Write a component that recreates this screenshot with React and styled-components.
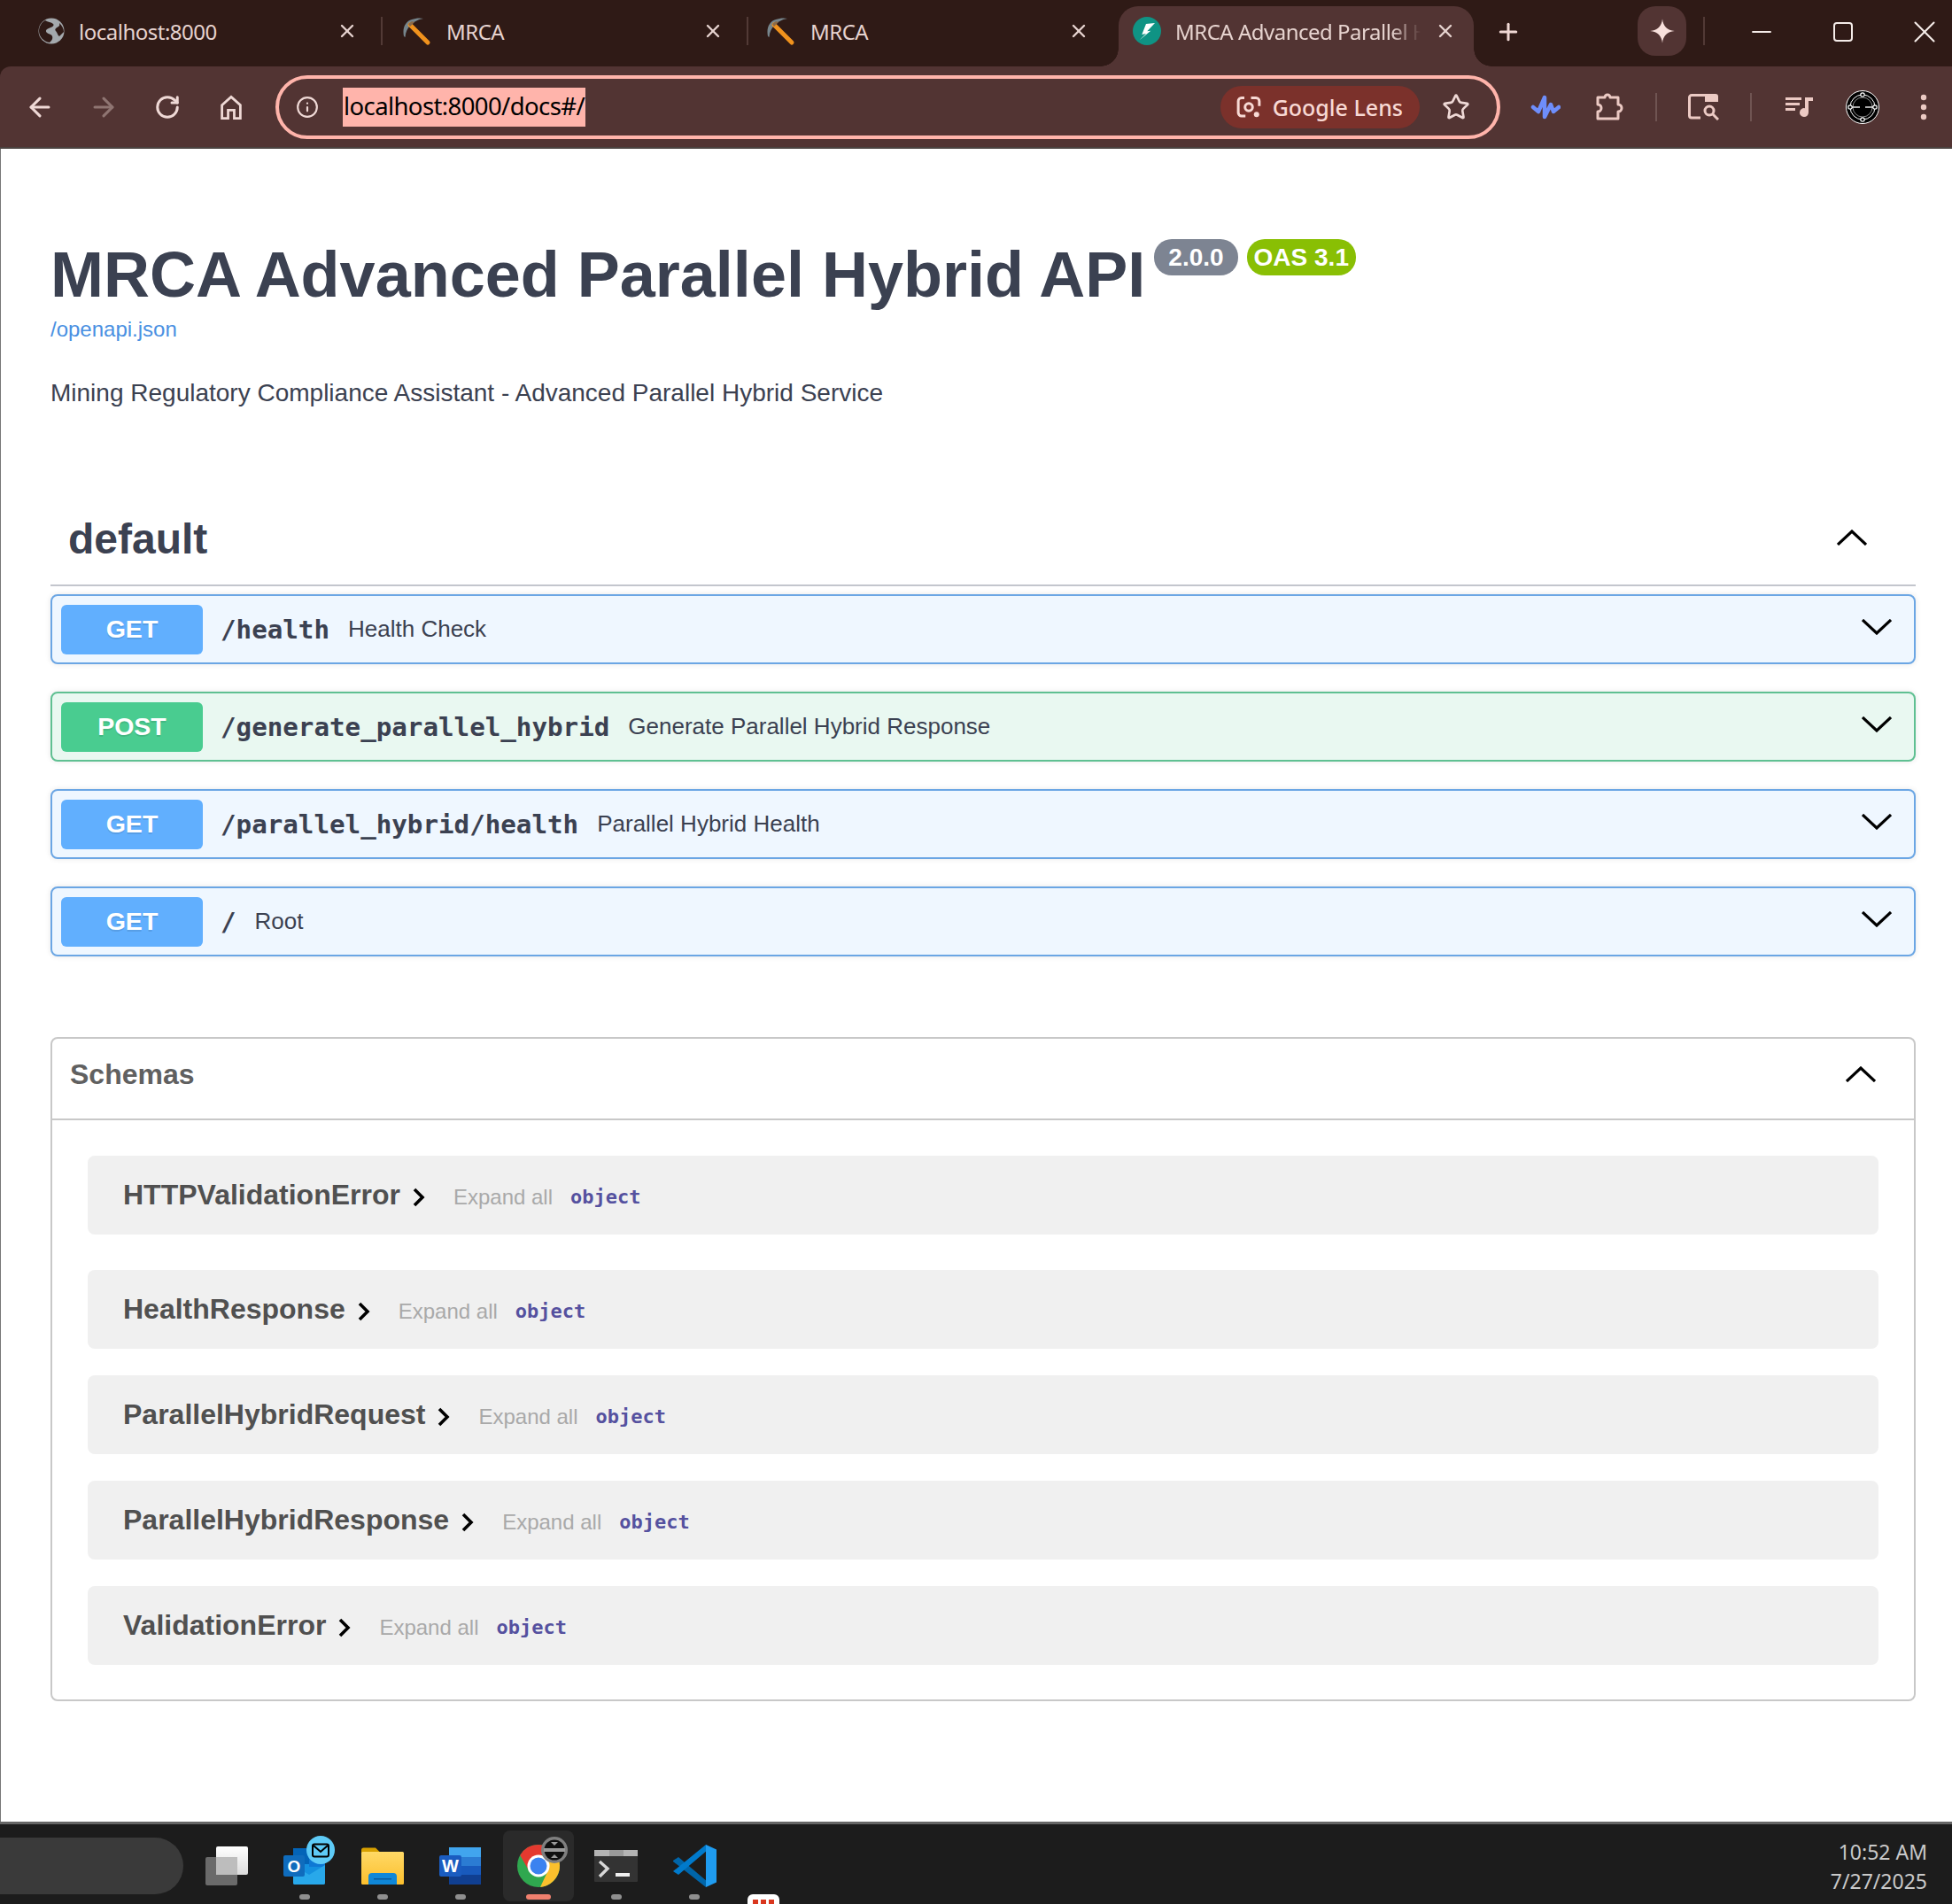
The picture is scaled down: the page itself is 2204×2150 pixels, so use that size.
import React from 'react';
import styled, { createGlobalStyle } from 'styled-components';
import { ArrowLeft, ArrowRight, RotateCw, Info, Star, X, Plus, Minus } from 'lucide-react';

const GlobalStyle = createGlobalStyle`
  html, body {
    margin: 0;
    padding: 0;
    width: 2204px;
    height: 2150px;
    overflow: hidden;
    background: #fff;
  }
  * { box-sizing: border-box; }
`;

const Screen = styled.div`
  display: flex;
  flex-direction: column;
  width: 2204px;
  height: 2150px;
  font-family: "Liberation Sans", Arial, sans-serif;
  background: #2f1a16;
`;

/* browser chrome */
const TabStrip = styled.div`
  display: flex;
  align-items: flex-end;
  flex: none;
  height: 75px;
  padding-left: 20px;
  background: #2f1a16;
  font-family: "Noto Sans", sans-serif;
`;

const Tab = styled.div`
  display: flex;
  align-items: center;
  flex: none;
  width: ${({ $w }) => $w}px;
  height: 68px;
  padding-left: ${({ $pad }) => $pad}px;
  padding-right: 28px;
  padding-bottom: 12px;
  gap: 16px;
  position: relative;
  color: #e6d3cf;
  ${({ $sep }) => $sep && `
    &::after {
      content: "";
      position: absolute;
      right: 0;
      top: 12px;
      width: 2px;
      height: 32px;
      background: #523a36;
    }
  `}
`;

const ActiveTab = styled(Tab)`
  background: #523433;
  border-radius: 22px 22px 0 0;
  margin-left: 5px;
  padding-right: 20px;
  &::before, &::after {
    content: "";
    position: absolute;
    bottom: 0;
    width: 20px;
    height: 20px;
  }
  &::before {
    left: -20px;
    background: radial-gradient(circle at 0 0, transparent 19.5px, #523433 20px);
  }
  &::after {
    right: -20px;
    background: radial-gradient(circle at 100% 0, transparent 19.5px, #523433 20px);
  }
`;

const TabTitle = styled.span`
  flex: 1;
  min-width: 0;
  font-size: 24px;
  letter-spacing: -0.5px;
  white-space: nowrap;
  overflow: hidden;
  ${({ $fade }) => $fade && `
    -webkit-mask-image: linear-gradient(to right, #000 88%, transparent 100%);
    mask-image: linear-gradient(to right, #000 88%, transparent 100%);
  `}
`;

const NewTab = styled.div`
  display: flex;
  align-items: center;
  justify-content: center;
  flex: none;
  width: 40px;
  height: 40px;
  margin: 0 0 19px 19px;
  color: #f0d8d4;
`;

const GeminiButton = styled.div`
  display: flex;
  align-items: center;
  justify-content: center;
  flex: none;
  width: 55px;
  height: 56px;
  margin: 0 0 12px 126px;
  border-radius: 20px;
  background: #523433;
`;

const StripSep = styled.div`
  flex: none;
  width: 2px;
  height: 32px;
  margin: 0 0 24px 19px;
  background: #523a36;
`;

const WindowButton = styled.div`
  display: flex;
  align-items: center;
  justify-content: center;
  flex: none;
  width: 92px;
  height: 75px;
  padding-bottom: 3px;
  color: #f5ece9;
  align-self: stretch;
  margin-left: ${({ $ml }) => $ml || 0}px;
`;

const Toolbar = styled.div`
  display: flex;
  align-items: center;
  flex: none;
  height: 93px;
  padding: 0 0 0 9px;
  background: #523433;
  border-top-left-radius: 12px;
  border-bottom: 2px solid #4b4341;
  overflow: hidden;
`;

const ToolButton = styled.div`
  display: flex;
  align-items: center;
  justify-content: center;
  flex: none;
  width: ${({ $w }) => $w || 72}px;
  height: 60px;
  color: ${({ $dim }) => ($dim ? '#8f7572' : '#efd9d6')};
`;

const ToolSep = styled.div`
  flex: none;
  width: 2px;
  height: 32px;
  margin: 0 ${({ $mx }) => $mx}px;
  background: #6f5452;
`;

const Omnibox = styled.div`
  display: flex;
  align-items: center;
  flex: none;
  width: 1383px;
  height: 72px;
  margin: 0 15px 0 14px;
  padding: 0 30px 0 19px;
  border: 4px solid #ffb4ab;
  border-radius: 36px;
  font-family: "Noto Sans", sans-serif;
`;

const UrlSelection = styled.span`
  display: block;
  margin-left: 27px;
  padding: 0 1px;
  height: 44px;
  line-height: 42px;
  background: #ffb4ab;
  color: #000;
  font-size: 27.5px;
  letter-spacing: -0.6px;
  white-space: nowrap;
`;

const LensPill = styled.div`
  display: flex;
  align-items: center;
  gap: 12px;
  height: 48px;
  margin-left: auto;
  padding: 0 19px 0 17px;
  border-radius: 24px;
  background: #7b312b;
  color: #f8d9d4;
  font-size: 25px;
  font-weight: 500;
`;

const StarWrap = styled.div`
  display: flex;
  margin-left: 25px;
  color: #efd9d6;
`;

/* swagger page */
const Page = styled.main`
  flex: 1;
  min-height: 0;
  padding: 102px 41px 0 56px;
  background: #fff;
  border-left: 1px solid #777;
  color: #3b4151;
`;

const TitleRow = styled.div`
  display: flex;
  align-items: flex-start;
  gap: 10px;
`;

const Title = styled.h1`
  margin: 4px 0 0;
  font-size: 72px;
  line-height: 72px;
  font-weight: 700;
  white-space: nowrap;
`;

const Badge = styled.span`
  display: flex;
  align-items: center;
  justify-content: center;
  height: 41px;
  padding: 0 ${({ $pad }) => $pad}px;
  border-radius: 20px;
  background: ${({ $bg }) => $bg};
  color: #fff;
  font-size: 28px;
  font-weight: 700;
`;

const SpecLink = styled.a`
  display: block;
  margin-top: 12px;
  color: #4990e2;
  font-size: 24px;
  line-height: 28px;
`;

const Description = styled.p`
  margin: 38px 0 0;
  font-size: 28px;
  line-height: 40px;
`;

const TagHeader = styled.div`
  display: flex;
  align-items: center;
  justify-content: space-between;
  height: 104px;
  margin-top: 94px;
  padding: 0 55px 0 20px;
  border-bottom: 2px solid #c3c6cd;
`;

const TagName = styled.h3`
  margin: 0;
  font-size: 48px;
  line-height: 60px;
  font-weight: 700;
`;

const RaisedChevron = styled.div`
  display: flex;
  margin-bottom: 5px;
`;

const Opblock = styled.div`
  display: flex;
  align-items: center;
  height: 79px;
  margin-top: ${({ $first }) => ($first ? 9 : 31)}px;
  padding: 0 25px 0 10px;
  background: ${({ $bg }) => $bg};
  border: 2px solid ${({ $line }) => $line};
  border-radius: 8px;
  box-shadow: 0 0 6px rgba(0, 0, 0, 0.1);
`;

const Method = styled.span`
  display: flex;
  align-items: center;
  justify-content: center;
  flex: none;
  width: 160px;
  height: 56px;
  border-radius: 6px;
  background: ${({ $bg }) => $bg};
  color: #fff;
  font-size: 28.5px;
  font-weight: 700;
  text-shadow: 0 2px 0 rgba(0, 0, 0, 0.1);
`;

const OpPath = styled.span`
  margin-left: 20px;
  font-family: "DejaVu Sans Mono", monospace;
  font-size: 29.2px;
  font-weight: 700;
`;

const OpSummary = styled.span`
  margin-left: 21px;
  font-size: 26px;
`;

const OpChevron = styled.div`
  display: flex;
  margin: 0 0 5px auto;
`;

const SchemaBox = styled.section`
  height: 750px;
  margin-top: 91px;
  border: 2px solid #c8c8c8;
  border-radius: 8px;
`;

const SchemaHeader = styled.div`
  display: flex;
  align-items: center;
  justify-content: space-between;
  height: 92px;
  padding: 0 43px 10px 20px;
  border-bottom: 2px solid #c8c8c8;
`;

const SchemaTitle = styled.h4`
  margin: 0;
  color: #606060;
  font-size: 32px;
  font-weight: 700;
`;

const ModelList = styled.div`
  padding: 40px 40px 0;
`;

const ModelRow = styled.div`
  display: flex;
  align-items: center;
  height: 89px;
  margin-bottom: ${({ $after }) => $after}px;
  padding: 4px 40px 0;
  border-radius: 8px;
  background: #f0f0f0;
`;

const ModelName = styled.span`
  color: #505050;
  font-size: 32px;
  font-weight: 700;
  margin-bottom: 4px;
`;

const ModelArrow = styled.div`
  display: flex;
  margin-left: 14px;
`;

const ExpandAll = styled.span`
  margin-left: 32px;
  color: #a9a9a9;
  font-size: 24px;
`;

const ModelType = styled.span`
  margin-left: 20px;
  color: #55519f;
  font-family: "DejaVu Sans Mono", monospace;
  font-size: 22px;
  font-weight: 700;
`;

/* windows taskbar */
const Taskbar = styled.footer`
  display: flex;
  flex: none;
  height: 93px;
  background: #1c1c1c;
  border-top: 3px solid #666;
  overflow: hidden;
`;

const SearchPill = styled.div`
  flex: none;
  width: 207px;
  height: 64px;
  margin: 15px 5px 0 0;
  border-radius: 0 32px 32px 0;
  background: #3a3a3a;
`;

const TaskSlot = styled.div`
  display: flex;
  flex-direction: column;
  align-items: center;
  flex: none;
  width: 80px;
  height: 80px;
  margin: 7px 4px 3px;
  padding-top: 8px;
  border-radius: 8px;
  background: ${({ $active }) => ($active ? '#2a2a2a' : 'transparent')};
`;

const TaskIcon = styled.svg`
  display: block;
  flex: none;
  overflow: visible;
`;

const TaskDot = styled.div`
  flex: none;
  width: ${({ $active }) => ($active ? 28 : 12)}px;
  height: 6px;
  border-radius: 3px;
  background: ${({ $active }) => ($active ? '#f0806e' : '#8f8f8f')};
`;

const PeekIcon = styled.svg`
  display: block;
  flex: none;
  margin: 79px 0 0 16px;
`;

const Clock = styled.div`
  margin-left: auto;
  padding: 15px 28px 0 0;
  color: #c9c9c9;
  font-family: "Noto Sans", sans-serif;
  font-size: 23px;
  line-height: 33px;
  text-align: right;
`;

/* drawings */
const Chevron = ({ up, w = 34 }) => (
  <svg width={w} height={18} viewBox="0 0 34 18" fill="none" stroke="#000" strokeWidth="3.2">
    <polyline points={up ? '1,17 17,2 33,17' : '1,1 17,16 33,1'} />
  </svg>
);

const SmallArrow = () => (
  <svg width={14} height={22} viewBox="0 0 14 22" fill="none" stroke="#000" strokeWidth="3.6">
    <polyline points="2,2 11,11 2,20" />
  </svg>
);

const GlobeIcon = () => (
  <svg width={30} height={30} viewBox="0 0 30 30">
    <circle cx="15" cy="15" r="14.5" fill="#a4a9ad" />
    <path d="M8 3c3 2 7 2 9 4s-2 4-5 5-4 3-2 5 5 1 6 4-1 5-3 7C6 27 1 21 1 15 1 10 4 5 8 3zM24 6c3 3 5 6 5 10l-5 5c-2-1-2-4-4-6s1-4 3-5 1-3 1-4z" fill="#2f1a16" />
  </svg>
);

const PickaxeIcon = () => (
  <svg width={33} height={33} viewBox="0 0 33 33" style={{ flex: 'none' }}>
    <path d="M1 22C-1 12 3 5 10 3 14 1.500 19 1 23 2 17 3 11 6 8 10 5 13 3 17 2.500 23z" fill="#76858c" />
    <path d="M8 9L28 29" stroke="#f0921d" strokeWidth="5" strokeLinecap="round" />
    <path d="M6 8l4-3 3 1-5 5z" fill="#8a6a4a" />
  </svg>
);

const FastApiIcon = () => (
  <svg width={32} height={32} viewBox="0 0 32 32" style={{ flex: 'none' }}>
    <circle cx="16" cy="16" r="16" fill="#0f9384" />
    <path d="M25 7L15 8 10.300 20 15 19 7.700 26.300 20.300 15.700 16.300 16.300z" fill="#fff" />
  </svg>
);

const Sparkle = () => (
  <svg width={30} height={30} viewBox="0 0 24 24">
    <path d="M12 1c.6 6.600 4.400 10.400 11 11-6.600.6-10.400 4.400-11 11-.6-6.600-4.400-10.400-11-11 6.600-.6 10.400-4.400 11-11z" fill="#f8e0dc" />
  </svg>
);

const HomeIcon = () => (
  <svg width={28} height={30} viewBox="0 0 24 26" fill="none" stroke="currentColor" strokeWidth="2.4">
    <path d="M3 11L12 3l9 8v13h-6v-8H9v8H3z" />
  </svg>
);

const LensIcon = () => (
  <svg width={30} height={30} viewBox="0 0 24 24" fill="none" stroke="#f8d9d4" strokeWidth="2.4">
    <path d="M8 3.500H5.500a3 3 0 00-3 3V17a3 3 0 003 3H9M14 3.500h4.500a3 3 0 013 3V11" />
    <circle cx="12" cy="12" r="3.400" />
    <circle cx="19" cy="18.500" r="2.400" fill="#f8d9d4" stroke="none" />
  </svg>
);

const WaveIcon = () => (
  <svg width={34} height={30} viewBox="0 0 34 30" fill="none" stroke="#6e8efb" strokeWidth="4.500" strokeLinejoin="round" strokeLinecap="round">
    <polyline points="3,15 9,20 16,4 16,26 23,12 26,20 32,15" />
  </svg>
);

const PuzzleIcon = () => (
  <svg width={32} height={32} viewBox="0 0 32 32" fill="none" stroke="#eccac4" strokeWidth="3">
    <path d="M3 5H11a3 3 0 016 0H26V13a4 4 0 010 8V29H3V21a4 4 0 000-8z" strokeLinejoin="round" />
  </svg>
);

const TabSearchIcon = () => (
  <svg width={35} height={30} viewBox="0 0 35 30" fill="none" stroke="#eccac4" strokeWidth="3">
    <path d="M14 27H4a2.500 2.500 0 01-2.500-2.500V4A2.500 2.500 0 014 1.500H20" />
    <path d="M19 0H31a3 3 0 013 3V9H19z" fill="#eccac4" stroke="none" />
    <circle cx="24" cy="19" r="5" />
    <path d="M28 23l6 6" />
  </svg>
);

const QueueIcon = () => (
  <svg width={31} height={24} viewBox="0 0 31 24" fill="none" stroke="#eccac4" strokeWidth="3">
    <path d="M0 2.500h18M0 8.500h16M0 14.500h11" />
    <path d="M22 1H31V5H26V18a5 5 0 11-4-4.800z" fill="#eccac4" stroke="none" />
  </svg>
);

const AvatarIcon = () => (
  <svg width={38} height={38} viewBox="0 0 38 38" fill="none">
    <circle cx="19" cy="19" r="18.500" fill="#000" stroke="#fff" strokeWidth="1" />
    <circle cx="19" cy="19" r="14" stroke="#fff" strokeWidth="1" />
    <circle cx="19" cy="19" r="11" stroke="#aaa" strokeWidth="0.800" />
    <path d="M5 19h11M22 19h11" stroke="#e8e8e8" strokeWidth="1.600" />
    <circle cx="19" cy="5" r="2.200" fill="#000" stroke="#fff" strokeWidth="1.200" />
    <circle cx="19" cy="33" r="2.200" fill="#000" stroke="#fff" strokeWidth="1.200" />
    <circle cx="5" cy="19" r="2.200" fill="#000" stroke="#fff" strokeWidth="1.200" />
    <circle cx="33" cy="19" r="2.200" fill="#000" stroke="#fff" strokeWidth="1.200" />
  </svg>
);

const DotsIcon = () => (
  <svg width={8} height={30} viewBox="0 0 8 30" fill="#eccac4">
    <circle cx="4" cy="4" r="3.200" />
    <circle cx="4" cy="15" r="3.200" />
    <circle cx="4" cy="26" r="3.200" />
  </svg>
);

const CopyGlyph = () => (
  <TaskIcon width={64} height={64} viewBox="0 0 64 64">
    <defs>
      <linearGradient id="cg" x1="0" y1="0" x2="0" y2="1">
        <stop offset="0" stopColor="#fff" />
        <stop offset="1" stopColor="#dcdcdc" />
      </linearGradient>
    </defs>
    <rect x="20" y="10" width="36" height="32" rx="2" fill="url(#cg)" />
    <rect x="8" y="22" width="36" height="32" rx="2" fill="#6a6a6a" />
    <rect x="20" y="22" width="24" height="20" fill="#bdbdbd" />
  </TaskIcon>
);

const OutlookGlyph = () => (
  <TaskIcon width={64} height={64} viewBox="0 0 64 64">
    <rect x="19" y="12" width="36" height="41" rx="2" fill="#1490df" />
    <rect x="19" y="12" width="18" height="18" fill="#0364b8" />
    <rect x="37" y="21" width="18" height="12" fill="#0f78d4" />
    <path d="M19 31l18 11 18-11v20a2 2 0 01-2 2H21a2 2 0 01-2-2z" fill="#28a8ea" />
    <rect x="8" y="20" width="24" height="24" rx="2" fill="#0f6cbd" />
    <text x="20" y="39" textAnchor="middle" fill="#fff" fontSize="19" fontWeight="700" fontFamily="Liberation Sans">O</text>
    <circle cx="50" cy="14" r="16" fill="#5ecbf7" />
    <rect x="41" y="7.500" width="18" height="14" rx="2" fill="none" stroke="#000" strokeWidth="2" />
    <path d="M42 9l8 7 8-7" fill="none" stroke="#000" strokeWidth="2" />
  </TaskIcon>
);

const FolderGlyph = () => (
  <TaskIcon width={64} height={64} viewBox="0 0 64 64">
    <defs>
      <linearGradient id="fg" x1="0" y1="0" x2="0" y2="1">
        <stop offset="0" stopColor="#ffd966" />
        <stop offset="1" stopColor="#fcbf2d" />
      </linearGradient>
    </defs>
    <path d="M8 14a2.500 2.500 0 012.500-2.500H24l5 5v8H8z" fill="#d8a000" />
    <rect x="8" y="16" width="48" height="37" rx="1.500" fill="url(#fg)" />
    <path d="M16 53V44a4 4 0 014-4h24a4 4 0 014 4v9z" fill="#0f87d8" />
    <rect x="22" y="46" width="20" height="1.500" fill="#0b5a99" />
  </TaskIcon>
);

const WordGlyph = () => (
  <TaskIcon width={64} height={64} viewBox="0 0 64 64">
    <rect x="19" y="11" width="36" height="11" fill="#41a5ee" />
    <rect x="19" y="22" width="36" height="10" fill="#2b7cd3" />
    <rect x="19" y="32" width="36" height="10" fill="#185abd" />
    <rect x="19" y="42" width="36" height="11" fill="#103f91" />
    <rect x="8" y="20" width="25" height="24" rx="2" fill="#1a5cc0" />
    <text x="20.500" y="39" textAnchor="middle" fill="#fff" fontSize="20" fontWeight="700" fontFamily="Liberation Sans">W</text>
  </TaskIcon>
);

const ChromeGlyph = () => (
  <TaskIcon width={64} height={64} viewBox="0 0 64 64">
    <circle cx="32" cy="32" r="24" fill="#2fa84f" />
    <path d="M32 20H52.800A24 24 0 0134 55.900L42.400 38z" fill="#fbc02d" />
    <path d="M11.200 20A24 24 0 0152.800 20H32L21.600 38z" fill="#e5392f" />
    <circle cx="32" cy="32" r="12.500" fill="#fff" />
    <circle cx="32" cy="32" r="9.500" fill="#3b82f0" />
    <circle cx="50" cy="14" r="15" fill="#7f7f7f" />
    <circle cx="50" cy="14" r="11.500" fill="#0f0f0f" />
    <rect x="38" y="12" width="24" height="4" fill="#9a9a9a" />
    <path d="M46 5h8l-4 4zM46 23h8l-4-4z" fill="#9a9a9a" />
  </TaskIcon>
);

const TerminalGlyph = () => (
  <TaskIcon width={64} height={64} viewBox="0 0 64 64">
    <rect x="7" y="14" width="49" height="36" rx="1" fill="#333" />
    <rect x="7" y="14" width="49" height="7" fill="#b4b4b4" />
    <rect x="24" y="14" width="16" height="7" fill="#9a9a9a" />
    <path d="M13 27l9 8-9 9" fill="none" stroke="#d8d8d8" strokeWidth="3.400" />
    <rect x="31" y="40" width="16" height="4" fill="#f0f0f0" />
  </TaskIcon>
);

const CodeGlyph = () => (
  <TaskIcon width={64} height={64} viewBox="0 0 64 64">
    <path d="M8 26l6-4 33 28-2 6-37-29z" fill="#0065a9" />
    <path d="M8 38l6 4 33-28-2-6L8 38z" fill="#007acc" />
    <path d="M45 8l12 5.500v37L45 56z" fill="#1f9cf0" />
  </TaskIcon>
);

const operations = [
  { method: 'GET', path: '/health', summary: 'Health Check' },
  { method: 'POST', path: '/generate_parallel_hybrid', summary: 'Generate Parallel Hybrid Response' },
  { method: 'GET', path: '/parallel_hybrid/health', summary: 'Parallel Hybrid Health' },
  { method: 'GET', path: '/', summary: 'Root' },
];

const methodColors = {
  GET: { bg: '#eff7ff', line: '#6ba6e4', badge: '#61affe' },
  POST: { bg: '#e9f8f1', line: '#5fc092', badge: '#49cc90' },
};

const schemas = [
  { name: 'HTTPValidationError', after: 40 },
  { name: 'HealthResponse', after: 30 },
  { name: 'ParallelHybridRequest', after: 30 },
  { name: 'ParallelHybridResponse', after: 30 },
  { name: 'ValidationError', after: 0 },
];

const taskIcons = [
  { glyph: <CopyGlyph /> },
  { glyph: <OutlookGlyph />, dot: true },
  { glyph: <FolderGlyph />, dot: true },
  { glyph: <WordGlyph />, dot: true },
  { glyph: <ChromeGlyph />, dot: true, active: true },
  { glyph: <TerminalGlyph />, dot: true },
  { glyph: <CodeGlyph />, dot: true },
];

export default function App() {
  return (
    <Screen>
      <GlobalStyle />
      <TabStrip>
        <Tab $w={412} $pad={23} $sep>
          <GlobeIcon />
          <TabTitle>localhost:8000</TabTitle>
          <X size={24} strokeWidth={2.4} />
        </Tab>
        <Tab $w={413} $pad={23} $sep>
          <PickaxeIcon />
          <TabTitle>MRCA</TabTitle>
          <X size={24} strokeWidth={2.4} />
        </Tab>
        <Tab $w={413} $pad={21}>
          <PickaxeIcon />
          <TabTitle>MRCA</TabTitle>
          <X size={24} strokeWidth={2.4} />
        </Tab>
        <ActiveTab $w={401} $pad={16}>
          <FastApiIcon />
          <TabTitle $fade>MRCA Advanced Parallel Hybrid</TabTitle>
          <X size={24} strokeWidth={2.4} />
        </ActiveTab>
        <NewTab>
          <Plus size={30} strokeWidth={2.4} />
        </NewTab>
        <GeminiButton>
          <Sparkle />
        </GeminiButton>
        <StripSep />
        <WindowButton $ml={18}>
          <Minus size={34} strokeWidth={1.5} />
        </WindowButton>
        <WindowButton>
          <svg width={22} height={22} viewBox="0 0 22 22" fill="none" stroke="currentColor" strokeWidth="2">
            <rect x="1" y="1" width="20" height="20" rx="3" />
          </svg>
        </WindowButton>
        <WindowButton>
          <X size={42} strokeWidth={1.2} />
        </WindowButton>
      </TabStrip>

      <Toolbar>
        <ToolButton><ArrowLeft size={34} strokeWidth={2.2} /></ToolButton>
        <ToolButton $dim><ArrowRight size={34} strokeWidth={2.2} /></ToolButton>
        <ToolButton><RotateCw size={30} strokeWidth={2.4} /></ToolButton>
        <ToolButton><HomeIcon /></ToolButton>
        <Omnibox>
          <Info size={26} color="#efd9d6" strokeWidth={2} />
          <UrlSelection>localhost:8000/docs#/</UrlSelection>
          <LensPill>
            <LensIcon />
            Google Lens
          </LensPill>
          <StarWrap><Star size={32} strokeWidth={2} /></StarWrap>
        </Omnibox>
        <ToolButton><WaveIcon /></ToolButton>
        <ToolButton><PuzzleIcon /></ToolButton>
        <ToolSep $mx={16} />
        <ToolButton><TabSearchIcon /></ToolButton>
        <ToolSep $mx={17} />
        <ToolButton><QueueIcon /></ToolButton>
        <ToolButton><AvatarIcon /></ToolButton>
        <ToolButton $w={65}><DotsIcon /></ToolButton>
      </Toolbar>

      <Page>
        <TitleRow>
          <Title>MRCA Advanced Parallel Hybrid API</Title>
          <Badge $bg="#7d8492" $pad={16}>2.0.0</Badge>
          <Badge $bg="#89bf04" $pad={8}>OAS 3.1</Badge>
        </TitleRow>
        <SpecLink>/openapi.json</SpecLink>
        <Description>Mining Regulatory Compliance Assistant - Advanced Parallel Hybrid Service</Description>

        <TagHeader>
          <TagName>default</TagName>
          <RaisedChevron><Chevron up /></RaisedChevron>
        </TagHeader>

        {operations.map((op, i) => {
          const colors = methodColors[op.method];
          return (
            <Opblock key={op.path} $first={i === 0} $bg={colors.bg} $line={colors.line}>
              <Method $bg={colors.badge}>{op.method}</Method>
              <OpPath>{op.path}</OpPath>
              <OpSummary>{op.summary}</OpSummary>
              <OpChevron><Chevron /></OpChevron>
            </Opblock>
          );
        })}

        <SchemaBox>
          <SchemaHeader>
            <SchemaTitle>Schemas</SchemaTitle>
            <Chevron up />
          </SchemaHeader>
          <ModelList>
            {schemas.map((model) => (
              <ModelRow key={model.name} $after={model.after}>
                <ModelName>{model.name}</ModelName>
                <ModelArrow><SmallArrow /></ModelArrow>
                <ExpandAll>Expand all</ExpandAll>
                <ModelType>object</ModelType>
              </ModelRow>
            ))}
          </ModelList>
        </SchemaBox>
      </Page>

      <Taskbar>
        <SearchPill />
        {taskIcons.map((item, i) => (
          <TaskSlot key={i} $active={item.active}>
            {item.glyph}
            {item.dot && <TaskDot $active={item.active} />}
          </TaskSlot>
        ))}
        <PeekIcon width={36} height={30} viewBox="0 0 36 30">
          <rect x="0" y="0" width="36" height="30" rx="6" fill="#fff" />
          <rect x="6" y="6" width="6" height="24" fill="#d9361e" />
          <rect x="15" y="6" width="6" height="24" fill="#d9361e" />
          <rect x="24" y="6" width="6" height="24" fill="#d9361e" />
        </PeekIcon>
        <Clock>
          <div>10:52 AM</div>
          <div>7/27/2025</div>
        </Clock>
      </Taskbar>
    </Screen>
  );
}
